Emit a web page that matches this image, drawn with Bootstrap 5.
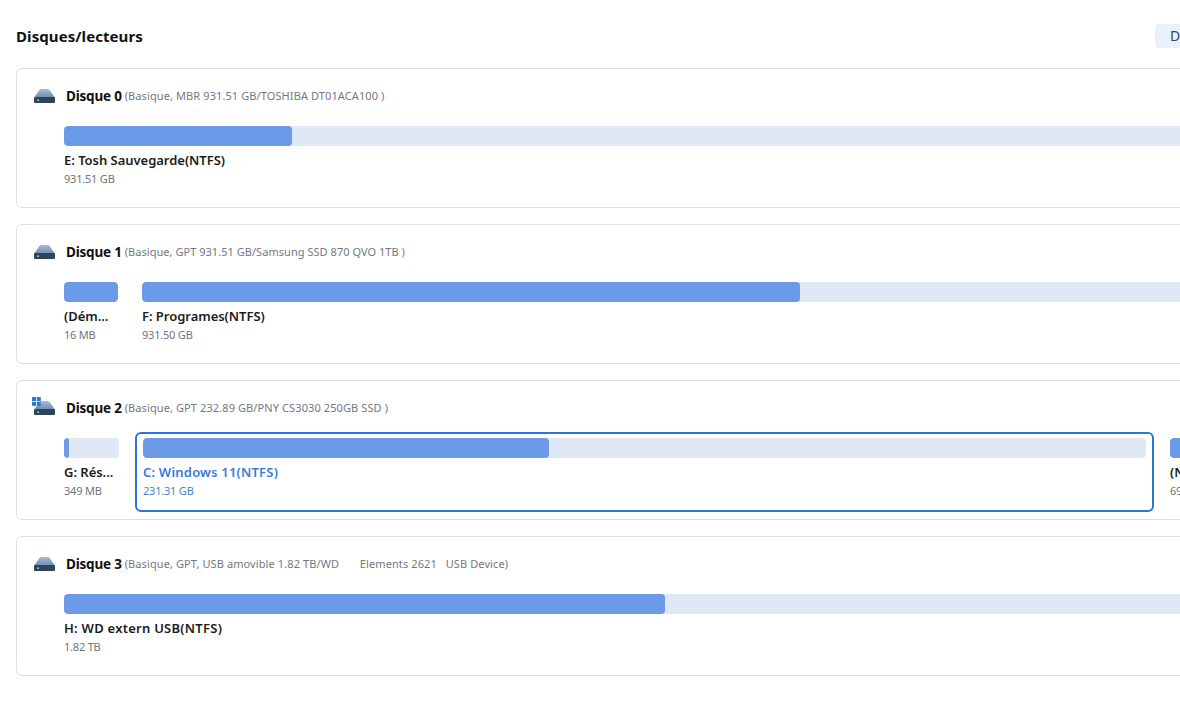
<!DOCTYPE html>
<html lang="fr">
<head>
<meta charset="utf-8">
<title>Disques/lecteurs</title>
<link rel="stylesheet" href="https://cdn.jsdelivr.net/npm/bootstrap@5.3.0/dist/css/bootstrap.min.css">
<style>
html,body{height:100%;overflow:hidden;background:#fff}
body{font-family:"Noto Sans","Open Sans",sans-serif;color:#111}
.shell{width:1240px;padding:0 16px}
.top-row{height:68px;padding-top:4px}
.page-title{font-size:15px;font-weight:700;margin:0;color:#111;letter-spacing:.08px}
.detail-btn{height:24px;width:69px;background:#e8f0fa;border:0;border-radius:4px 0 0 4px;font-size:14px;color:#3b4658;padding:0 0 0 15px;text-align:left;margin-top:-1px;flex:none}
.disk-box{height:140px;border:1px solid #dcdfe3;border-radius:6px;margin-bottom:16px;padding-left:39px;background:#fff}
.disk-head{height:51px;margin-left:-23px;padding-top:3px}
.disk-ico{width:23px;height:22px;flex:none;margin-right:10px;overflow:visible}
.disk-name{font-size:13.5px;font-weight:700;color:#111;letter-spacing:-.2px;white-space:nowrap}
.disk-sub{font-size:11px;color:#73787f;margin-left:3px;white-space:pre;letter-spacing:.1px}
.disk-sub.sub-tight{letter-spacing:.04px}
.part{border:2px solid transparent;border-radius:6px;padding:4px 6px;height:80px;min-width:0;flex:none}
.part.active-part{border-color:#2a76d8}
.track{height:20px;background:#e0e7f5;border-radius:4px;overflow:hidden}
.fill{height:100%;background:#6b9ae8;border-radius:4px}
.part-name{font-size:13px;font-weight:600;line-height:18px;margin-top:5px;color:#1b1b1b;white-space:nowrap;overflow:hidden;letter-spacing:-.03px}
.part-name.name-wide{letter-spacing:.25px}
.part-size{font-size:11px;line-height:16px;margin-top:2px;color:#6f747b;white-space:nowrap;overflow:hidden;letter-spacing:-.2px}
.active-part .part-name{color:#3a7bd5;letter-spacing:.2px}
.active-part .part-size{color:#4a80c8}
.w-full{width:1152px}
.w-sys{width:71px}
.w-boot{width:70px}
.w-win{width:1019px}
.w-rest{width:180px}
.w-f{width:1070px}
</style>
</head>
<body>
<svg width="0" height="0" class="position-absolute">
<defs>
<linearGradient id="dome" x1="0" y1="0" x2="0" y2="1"><stop offset="0" stop-color="#a9bdd6"/><stop offset="1" stop-color="#6f8fb5"/></linearGradient>
<symbol id="hdd" viewBox="0 0 23 22">
<path d="M6 5.5Q6.5 4 8 4H15Q16.5 4 17 5.5L21.5 12H1.5Z" fill="url(#dome)"/>
<path d="M1 13Q1 12 2 12H21Q22 12 22 13V17Q22 18 21 18H2Q1 18 1 17Z" fill="#2f4359"/>
<rect x="4" y="14.5" width="2" height="1.5" fill="#7fd0c0"/>
</symbol>
</defs>
</svg>
<div class="shell">
  <div class="top-row d-flex align-items-center justify-content-between">
    <h1 class="page-title">Disques/lecteurs</h1>
    <button class="detail-btn" type="button">Détails</button>
  </div>

  <section class="disk-box">
    <div class="disk-head d-flex align-items-center">
      <svg class="disk-ico"><use href="#hdd"/></svg>
      <span class="disk-name">Disque 0</span>
      <span class="disk-sub">(Basique, MBR 931.51 GB/TOSHIBA DT01ACA100 )</span>
    </div>
    <div class="d-flex gap-2">
      <div class="part w-full">
        <div class="track"><div class="fill" style="width:20.1%"></div></div>
        <div class="part-name">E: Tosh Sauvegarde(NTFS)</div>
        <div class="part-size">931.51 GB</div>
      </div>
    </div>
  </section>

  <section class="disk-box">
    <div class="disk-head d-flex align-items-center">
      <svg class="disk-ico"><use href="#hdd"/></svg>
      <span class="disk-name">Disque 1</span>
      <span class="disk-sub sub-tight">(Basique, GPT 931.51 GB/Samsung SSD 870 QVO 1TB )</span>
    </div>
    <div class="d-flex gap-2">
      <div class="part w-boot">
        <div class="track"><div class="fill" style="width:100%"></div></div>
        <div class="part-name">(Dém...</div>
        <div class="part-size">16 MB</div>
      </div>
      <div class="part w-f">
        <div class="track"><div class="fill" style="width:62.4%"></div></div>
        <div class="part-name">F: Programes(NTFS)</div>
        <div class="part-size">931.50 GB</div>
      </div>
    </div>
  </section>

  <section class="disk-box">
    <div class="disk-head d-flex align-items-center">
      <svg class="disk-ico" viewBox="0 0 23 22">
        <use href="#hdd"/>
        <g fill="#2a78d6"><rect x="-1" y="0" width="4" height="4"/><rect x="3.8" y="0" width="4" height="4"/><rect x="-1" y="4.8" width="4" height="4"/><rect x="3.8" y="4.8" width="4" height="4"/></g>
      </svg>
      <span class="disk-name">Disque 2</span>
      <span class="disk-sub">(Basique, GPT 232.89 GB/PNY CS3030 250GB SSD )</span>
    </div>
    <div class="d-flex gap-2">
      <div class="part w-sys">
        <div class="track"><div class="fill" style="width:9%"></div></div>
        <div class="part-name">G: Rés...</div>
        <div class="part-size">349 MB</div>
      </div>
      <div class="part w-win active-part">
        <div class="track"><div class="fill" style="width:40.5%"></div></div>
        <div class="part-name">C: Windows 11(NTFS)</div>
        <div class="part-size">231.31 GB</div>
      </div>
      <div class="part w-rest">
        <div class="track"><div class="fill" style="width:100%"></div></div>
        <div class="part-name">(NTFS)</div>
        <div class="part-size">699 MB</div>
      </div>
    </div>
  </section>

  <section class="disk-box">
    <div class="disk-head d-flex align-items-center">
      <svg class="disk-ico"><use href="#hdd"/></svg>
      <span class="disk-name">Disque 3</span>
      <span class="disk-sub">(Basique, GPT, USB amovible 1.82 TB/WD       Elements 2621   USB Device)</span>
    </div>
    <div class="d-flex gap-2">
      <div class="part w-full">
        <div class="track"><div class="fill" style="width:52.9%"></div></div>
        <div class="part-name name-wide">H: WD extern USB(NTFS)</div>
        <div class="part-size">1.82 TB</div>
      </div>
    </div>
  </section>
</div>
<script src="https://cdn.jsdelivr.net/npm/bootstrap@5.3.0/dist/js/bootstrap.bundle.min.js"></script>
</body>
</html>
